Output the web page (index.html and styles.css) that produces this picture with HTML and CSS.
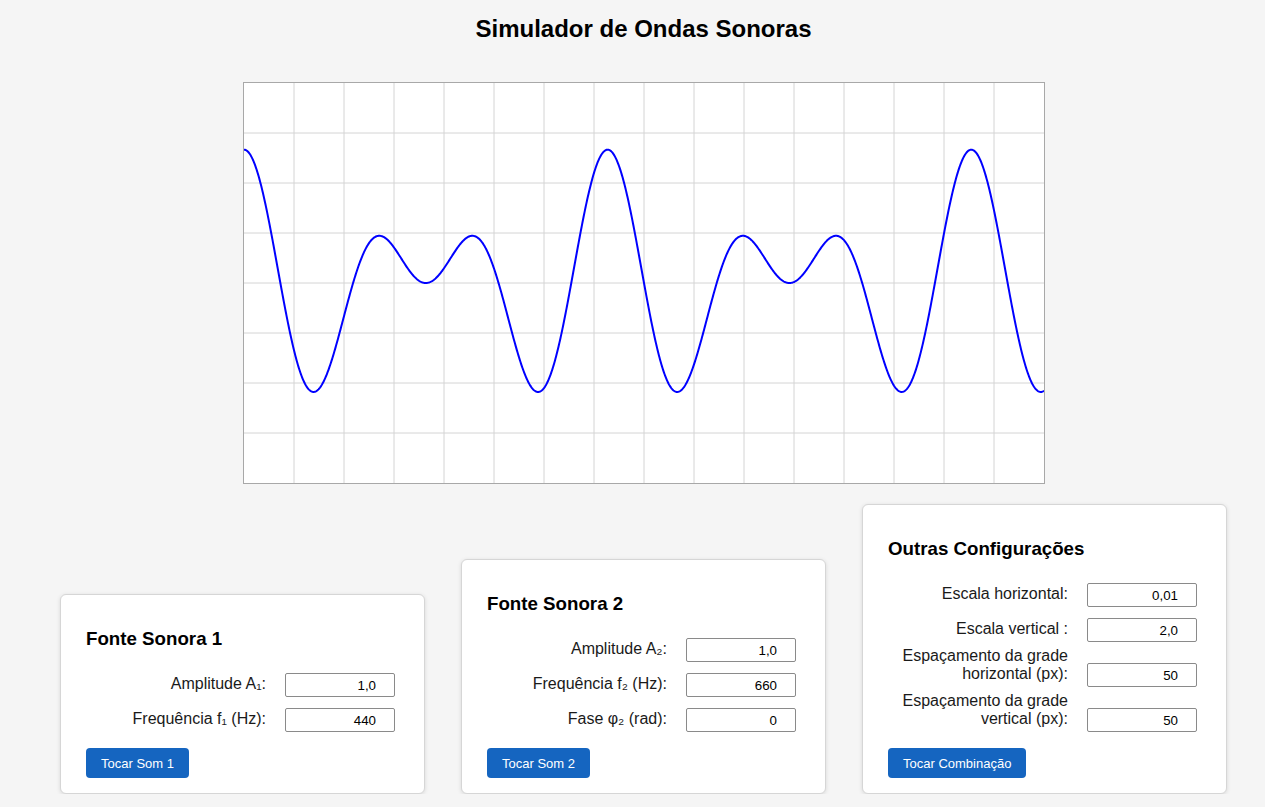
FILE: index.html
```html
<!DOCTYPE html>
<html lang="pt-BR">
<head>
<meta charset="utf-8">
<title>Simulador de Ondas Sonoras</title>
<link rel="stylesheet" href="styles.css">
</head>
<body>
<h1 class="title">Simulador de Ondas Sonoras</h1>
<canvas id="wave" class="scope" width="800" height="400"></canvas>
<div class="panels">
  <div class="panel">
    <h3 class="panel-title">Fonte Sonora 1</h3>
    <div class="row"><label class="lbl">Amplitude A₁:</label><input class="num" type="text" value="1,0"></div>
    <div class="row"><label class="lbl">Frequência f₁ (Hz):</label><input class="num" type="text" value="440"></div>
    <button class="btn">Tocar Som 1</button>
  </div>
  <div class="panel">
    <h3 class="panel-title">Fonte Sonora 2</h3>
    <div class="row"><label class="lbl">Amplitude A₂:</label><input class="num" type="text" value="1,0"></div>
    <div class="row"><label class="lbl">Frequência f₂ (Hz):</label><input class="num" type="text" value="660"></div>
    <div class="row"><label class="lbl">Fase φ₂ (rad):</label><input class="num" type="text" value="0"></div>
    <button class="btn">Tocar Som 2</button>
  </div>
  <div class="panel">
    <h3 class="panel-title">Outras Configurações</h3>
    <div class="row"><label class="lbl">Escala horizontal:</label><input class="num" type="text" value="0,01"></div>
    <div class="row"><label class="lbl">Escala vertical :</label><input class="num" type="text" value="2,0"></div>
    <div class="row"><label class="lbl">Espaçamento da grade horizontal (px):</label><input class="num" type="text" value="50"></div>
    <div class="row"><label class="lbl">Espaçamento da grade vertical (px):</label><input class="num" type="text" value="50"></div>
    <button class="btn">Tocar Combinação</button>
  </div>
</div>
<script src="script.js"></script>
</body>
</html>
```
FILE: styles.css
```css
* { box-sizing: border-box; }
html, body { margin: 0; }
body {
  background: #f5f5f5;
  font-family: "Liberation Sans", Arial, sans-serif;
  color: #111;
  padding-left: 22px;
}
.title {
  margin: 15px 0 39px;
  font-size: 24px;
  line-height: 28px;
  font-weight: bold;
  text-align: center;
  color: #000;
}
.scope {
  display: block;
  margin: 0 auto;
  width: 802px;
  height: 402px;
  border: 1px solid #a8a8a8;
  background: #fff;
}
.panels {
  display: flex;
  justify-content: center;
  align-items: flex-end;
  gap: 36px;
  margin-top: 20px;
}
.panel {
  width: 365px;
  background: #fff;
  border: 1px solid #d6d6d6;
  border-radius: 6px;
  box-shadow: 0 1px 4px rgba(0, 0, 0, 0.12);
  padding: 14px 25px 15px;
}
.panel-title {
  margin: 19px 0 17px;
  font-size: 18.72px;
  line-height: 22px;
  font-weight: bold;
  color: #000;
}
.row {
  display: flex;
  align-items: flex-end;
  min-height: 30px;
  margin-top: 5px;
}
.lbl {
  flex: 0 0 180px;
  width: 180px;
  margin-right: 19px;
  text-align: right;
  font-size: 16px;
  line-height: 18px;
  padding-bottom: 4px;
  color: #1a1a1a;
}
.num {
  width: 110px;
  height: 24px;
  border: 1px solid #8a8a8a;
  border-radius: 2px;
  padding: 0 18px 0 4px;
  text-align: right;
  font-family: "Liberation Sans", Arial, sans-serif;
  font-size: 13.33px;
  color: #000;
  background: #fff;
}
.btn {
  display: block;
  margin-top: 16px;
  height: 30px;
  padding: 0 15px;
  border: none;
  border-radius: 4px;
  background: #1565c0;
  color: #fff;
  font-family: "Liberation Sans", Arial, sans-serif;
  font-size: 13px;
}
```
FILE: script.js
```js
(function () {
  var c = document.getElementById('wave');
  var ctx = c.getContext('2d');
  var W = 800, H = 400;
  ctx.fillStyle = '#fff';
  ctx.fillRect(0, 0, W, H);
  ctx.strokeStyle = '#d4d4d4';
  ctx.lineWidth = 1;
  for (var x = 50; x < W; x += 50) {
    ctx.beginPath(); ctx.moveTo(x, 0); ctx.lineTo(x, H); ctx.stroke();
  }
  for (var y = 50; y < H; y += 50) {
    ctx.beginPath(); ctx.moveTo(0, y); ctx.lineTo(W, y); ctx.stroke();
  }
  var A1 = 1, f1 = 440, A2 = 1, f2 = 660, ph = 0, sh = 0.01, k = 200 / 3;
  ctx.strokeStyle = '#0000ff';
  ctx.lineWidth = 2;
  ctx.beginPath();
  for (var i = 0; i <= W * 2; i++) {
    var px = i / 2;
    var t = px * sh / W;
    var v = A1 * Math.cos(2 * Math.PI * f1 * t) + A2 * Math.cos(2 * Math.PI * f2 * t + ph);
    var py = H / 2 - k * v;
    if (i === 0) ctx.moveTo(px, py); else ctx.lineTo(px, py);
  }
  ctx.stroke();
})();
```
